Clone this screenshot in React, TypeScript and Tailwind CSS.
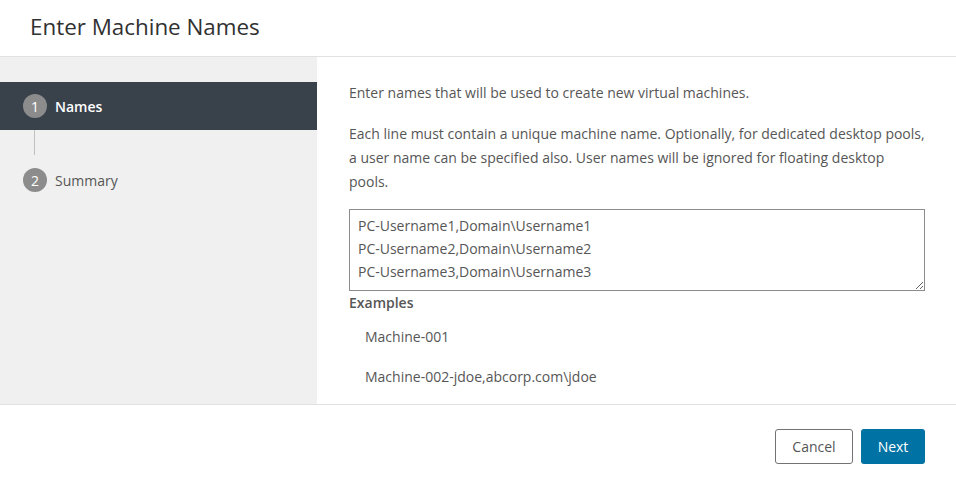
export default function App() {
  return (
    <div className="w-[956px] h-[483px] bg-white flex flex-col font-['Open_Sans',sans-serif] text-[#565656] overflow-hidden">
      <div className="h-[57px] border-b border-[#e1e1e1] flex items-center px-[30px] shrink-0">
        <h2 className="text-[22.4px] text-[#313131] font-normal leading-none -mt-[1px]">Enter Machine Names</h2>
      </div>

      <div className="flex h-[348px] shrink-0 border-b border-[#e1e1e1]">
        <div className="w-[317px] bg-[#f0f0f0] pt-[25px] shrink-0">
          <div className="h-[48px] bg-[#39414b] flex items-center pl-[23px] gap-[8px]">
            <span className="w-[24px] h-[24px] rounded-full bg-[#8c8c8c] text-white text-[14px] flex items-center justify-center">1</span>
            <span className="text-white text-[14px] font-semibold">Names</span>
          </div>
          <div className="ml-[34px] w-px h-[25px] bg-[#c0c0c0]" />
          <div className="h-[24px] flex items-center pl-[23px] gap-[8px] mt-[13px]">
            <span className="w-[24px] h-[24px] rounded-full bg-[#8c8c8c] text-white text-[14px] flex items-center justify-center">2</span>
            <span className="text-[14px] text-[#565656]">Summary</span>
          </div>
        </div>

        <div className="flex-1 pl-[32px] pr-[31px] pt-[24px] text-[14px] leading-[24px]">
          <p>Enter names that will be used to create new virtual machines.</p>
          <p className="mt-[17px]">
            Each line must contain a unique machine name. Optionally, for dedicated desktop pools, a user name can be specified also. User names will be ignored for floating desktop pools.
          </p>
          <textarea
            className="mt-[15px] w-full h-[82px] border border-[#8c8c8c] px-[8px] py-[4px] text-[14px] leading-[23px] text-[#565656] font-['Open_Sans',sans-serif] outline-none block"
            defaultValue={"PC-Username1,Domain\\Username1\nPC-Username2,Domain\\Username2\nPC-Username3,Domain\\Username3"}
          />
          <div className="font-semibold text-[#565656]">Examples</div>
          <div className="pl-[16px] mt-[10px]">Machine-001</div>
          <div className="pl-[16px] mt-[16px]">Machine-002-jdoe,abcorp.com\jdoe</div>
        </div>
      </div>

      <div className="flex-1 flex items-start justify-end gap-[8px] pr-[31px] pt-[24px]">
        <button className="h-[35px] w-[78px] border border-[#737373] rounded-[3px] text-[#565656] text-[14px] bg-white">Cancel</button>
        <button className="h-[35px] w-[64px] rounded-[3px] bg-[#0072a3] text-white text-[14px]">Next</button>
      </div>
    </div>
  );
}
